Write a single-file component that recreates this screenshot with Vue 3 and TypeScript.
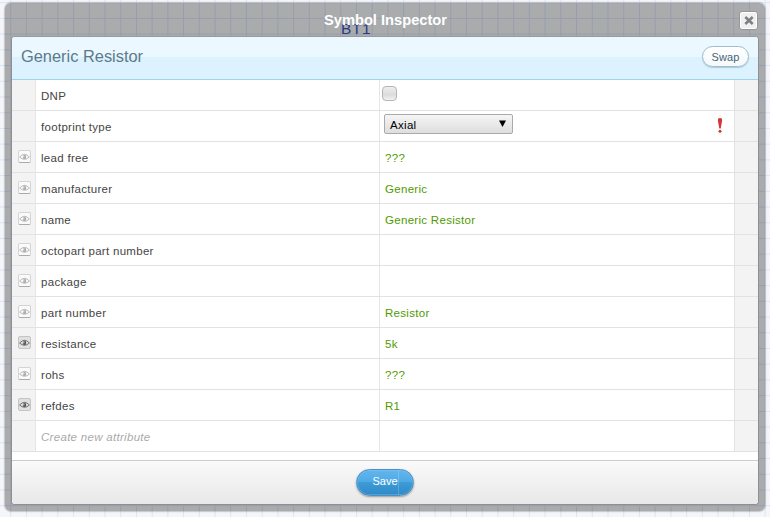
<script setup lang="ts">
import { ref } from 'vue'

interface Attribute {
  label: string
  value?: string
  kind?: 'checkbox' | 'select' | 'new'
  eye?: 'on' | 'off'
}

const attributes = ref<Attribute[]>([
  { label: 'DNP', kind: 'checkbox' },
  { label: 'footprint type', kind: 'select', value: 'Axial' },
  { label: 'lead free', value: '???', eye: 'off' },
  { label: 'manufacturer', value: 'Generic', eye: 'off' },
  { label: 'name', value: 'Generic Resistor', eye: 'off' },
  { label: 'octopart part number', eye: 'off' },
  { label: 'package', eye: 'off' },
  { label: 'part number', value: 'Resistor', eye: 'off' },
  { label: 'resistance', value: '5k', eye: 'on' },
  { label: 'rohs', value: '???', eye: 'off' },
  { label: 'refdes', value: 'R1', eye: 'on' },
  { label: 'Create new attribute', kind: 'new' },
])
const dnp = ref(false)

function toggleEye(row: Attribute) {
  row.eye = row.eye === 'on' ? 'off' : 'on'
}
</script>

<template>
  <div class="canvas">
    <span class="part-label">BT1</span>
    <section class="dialog">
      <header class="titlebar">
        <h1>Symbol Inspector</h1>
        <button class="close" aria-label="Close">
          <svg width="10" height="9" viewBox="0 0 10 9"><path d="M1.3 1L8.7 8M8.7 1L1.3 8" stroke="#808080" stroke-width="2.6" /></svg>
        </button>
      </header>
      <div class="panel">
        <div class="head">
          <h2>Generic Resistor</h2>
          <button class="swap">Swap</button>
        </div>
        <div class="rows">
          <div v-for="row in attributes" :key="row.label" class="row">
            <div class="gutter">
              <button v-if="row.eye" class="eye" :class="row.eye" aria-label="Toggle visibility" @click="toggleEye(row)">
                <svg width="11" height="8" viewBox="0 0 11 8">
                  <path d="M.6 4Q5.5 -1.4 10.4 4Q5.5 8.6 .6 4Z" fill="none" stroke="currentColor" stroke-width=".8" />
                  <ellipse cx="5.5" cy="3.9" rx="1.7" ry="2.2" fill="currentColor" />
                  <path d="M4.8 2.5v1.8" stroke="#fff" stroke-width=".8" />
                </svg>
              </button>
            </div>
            <div class="label" :class="{ placeholder: row.kind === 'new' }">{{ row.label }}</div>
            <div class="value">
              <button v-if="row.kind === 'checkbox'" class="check" role="checkbox" :aria-checked="dnp" @click="dnp = !dnp"></button>
              <template v-else-if="row.kind === 'select'">
                <button class="select">
                  <span>{{ row.value }}</span>
                  <svg width="7" height="7" viewBox="0 0 7 7"><path d="M0 .5H7L3.5 7Z" fill="#000" /></svg>
                </button>
                <svg class="alert" width="6" height="15" viewBox="0 0 6 15">
                  <path d="M.8 2Q.8 0 3 0T5.2 2L3.7 10.5H2.3Z" fill="#d23533" />
                  <circle cx="3" cy="13.3" r="1.5" fill="#d23533" />
                </svg>
              </template>
              <span v-else class="text">{{ row.value }}</span>
            </div>
            <div class="end"></div>
          </div>
        </div>
        <footer><button class="save">Save</button></footer>
      </div>
    </section>
  </div>
</template>

<style>
body { margin: 0; overflow: hidden; }
</style>

<style scoped>
* { box-sizing: border-box; }
button { font-family: inherit; margin: 0; padding: 0; }
.canvas {
  position: relative;
  width: 770px;
  height: 517px;
  padding: 3px 5px 6px;
  overflow: hidden;
  font-family: "Liberation Sans", Arial, sans-serif;
  background-color: #f4f6f9;
  background-image:
    linear-gradient(to right, #d9e5f8 1.2px, transparent 1.2px),
    linear-gradient(to bottom, #d9e5f8 1.2px, transparent 1.2px);
  background-size: 15.73px 15.73px;
  background-position: 10.2px 2.2px;
}
.part-label {
  position: absolute;
  left: 341px;
  top: 20px;
  font-size: 15.5px;
  line-height: 18px;
  letter-spacing: .6px;
  color: #3c55be;
}
.dialog {
  position: relative;
  width: 760px;
  height: 508px;
  padding: 0 6px 6px;
  border-radius: 6px;
  background: rgba(0, 0, 0, .305);
  box-shadow: 0 0 1px 1px rgba(0, 0, 0, .16), 0 0 3px rgba(0, 0, 0, .1);
}
.titlebar {
  display: flex;
  justify-content: center;
  position: relative;
  height: 33px;
}
h1 {
  margin: 0;
  padding: 8px 0 0 1px;
  font-size: 14.67px;
  line-height: 18px;
  color: #fff;
}
.close {
  position: absolute;
  right: 1px;
  top: 8px;
  display: flex;
  align-items: center;
  justify-content: center;
  width: 19px;
  height: 19px;
  border: 1px solid #969696;
  border-radius: 3px;
  background: #f0f0f0;
  box-shadow: inset 0 0 0 1px #fff;
}
.panel {
  width: 748px;
  height: 469px;
  border: 1px solid #8d8f93;
  border-top-color: #999;
  border-radius: 4px;
  overflow: hidden;
  background: #fff;
}
.head {
  display: flex;
  align-items: center;
  justify-content: space-between;
  height: 43px;
  padding: 0 9px 3px 9px;
  border-bottom: 1px solid #9fd4ee;
  background: linear-gradient(#ebf8ff 0 20px, #dcf2fe 20px);
}
h2 {
  margin: 0;
  font-weight: normal;
  font-size: 16.4px;
  color: #5d7a8a;
}
.swap {
  width: 47px;
  height: 21px;
  border: 1px solid #9fbdcb;
  border-radius: 11px;
  background: linear-gradient(#fff, #f5f9fb);
  box-shadow: 0 1px 1px rgba(90, 130, 150, .35);
  font-size: 11px;
  line-height: 18px;
  letter-spacing: .1px;
  color: #4a6373;
}
.rows { height: 380px; }
.row {
  display: grid;
  grid-template-columns: 24px 344px 354px 24px;
  height: 31px;
  border-bottom: 1px solid #e2e2e2;
  font-size: 11.5px;
  line-height: 33px;
  letter-spacing: .3px;
}
.row > * { height: 30px; }
.gutter {
  padding: 8px 0 0 6px;
  background: #f3f3f3;
  border-right: 1px solid #e6e6e6;
}
.eye {
  display: flex;
  align-items: center;
  justify-content: center;
  width: 13px;
  height: 13px;
  border: 1px solid #d4d4d4;
  border-bottom-color: #aaa;
  border-radius: 2px;
  background: #fafafa;
  color: #aaa;
}
.eye.on {
  border-color: #c4c4c4;
  background: #e0e0e0;
  color: #555;
}
.eye svg { flex: none; }
.label {
  padding-left: 5px;
  border-right: 1px solid #e6e6e6;
  color: #444;
}
.placeholder { font-style: italic; color: #aaa; }
.value {
  display: flex;
  align-items: flex-start;
  padding-left: 5px;
  color: #4f9a00;
}
.end { background: #f3f3f3; border-left: 1px solid #e2e2e2; }
.check {
  width: 15px;
  height: 15px;
  margin: 6px 0 0 -3px;
  border: 1px solid #b5b5b5;
  border-radius: 4px;
  background: linear-gradient(#eee, #dcdcdc 60%, #f2f2f2);
}
.select {
  display: flex;
  align-items: center;
  justify-content: space-between;
  width: 129px;
  height: 20px;
  margin: 3px 0 0 -1px;
  padding: 2px 6px 0 5px;
  border: 1px solid #aaa;
  border-radius: 2px;
  background: linear-gradient(#f5f5f5, #dedede);
  font-size: 11.5px;
  letter-spacing: .3px;
  line-height: 16px;
  color: #000;
}
.select svg { margin-bottom: 4px; }
.alert { margin: 7px 11px 0 auto; }
footer {
  display: flex;
  justify-content: center;
  height: 44px;
  padding-top: 8px;
  border-top: 1px solid #ccc;
  background: linear-gradient(#fafafa, #e8e8e8);
}
.save {
  width: 58px;
  height: 27px;
  padding-bottom: 3px;
  border: 1px solid #4b8fc4;
  border-radius: 14px;
  background: linear-gradient(90deg, transparent 41px, rgba(255, 255, 255, .18) 41px 42px, transparent 42px), linear-gradient(#63b5ef, #4ea9e2 50%, #3d9cd8 50%, #3089c4);
  box-shadow: inset 0 0 0 1px rgba(140, 205, 250, .35), 0 1px 2px rgba(0, 0, 0, .35);
  font-size: 11px;
  line-height: 20px;
  color: #fff;
}
</style>
